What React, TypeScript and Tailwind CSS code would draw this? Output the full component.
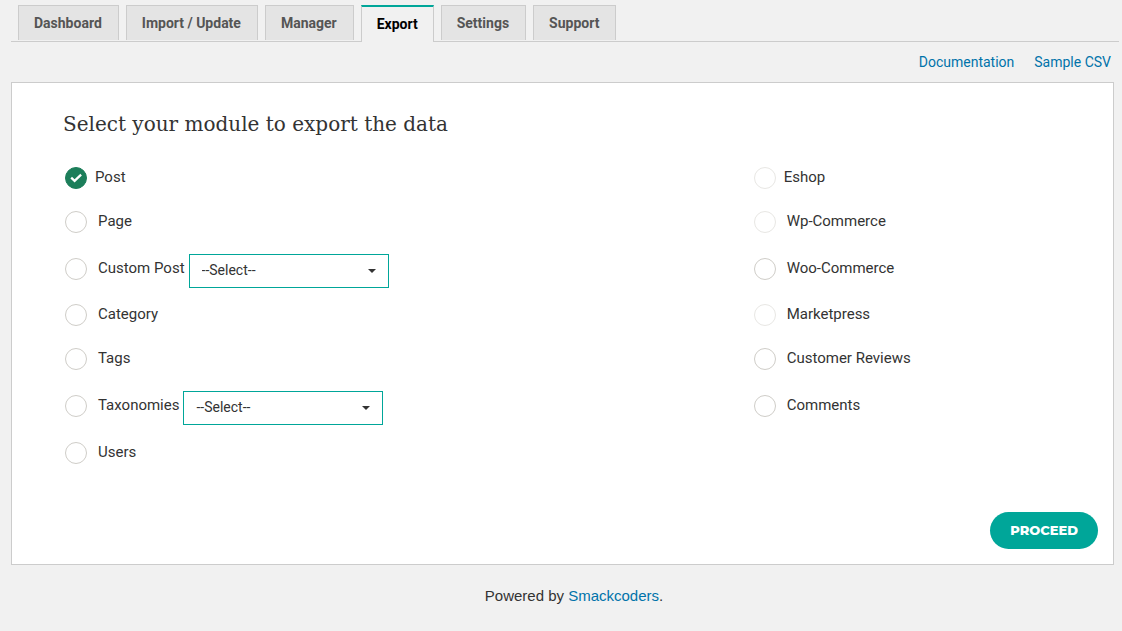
import { useState } from "react";

const tabs = ["Dashboard", "Import / Update", "Manager", "Export", "Settings", "Support"];

type Module = { name: string; disabled?: boolean; select?: boolean; tight?: boolean };

const leftModules: Module[] = [
  { name: "Post", tight: true },
  { name: "Page" },
  { name: "Custom Post", select: true },
  { name: "Category" },
  { name: "Tags" },
  { name: "Taxonomies", select: true },
  { name: "Users" },
];

const rightModules: Module[] = [
  { name: "Eshop", disabled: true, tight: true },
  { name: "Wp-Commerce", disabled: true },
  { name: "Woo-Commerce" },
  { name: "Marketpress", disabled: true },
  { name: "Customer Reviews" },
  { name: "Comments" },
];

function ModuleSelect({ label }: { label: string }) {
  return (
    <div className="relative mt-1 ml-1 w-[200px]">
      <select
        aria-label={label}
        className="block h-[34px] w-full appearance-none border border-[#00a699] bg-white px-3 pb-px text-sm text-[#333]"
      >
        <option>--Select--</option>
      </select>
      <svg
        viewBox="0 0 8 4"
        className="pointer-events-none absolute top-[15px] right-[13px] h-1 w-2 fill-[#333]"
        aria-hidden="true"
      >
        <path d="M0 0h8L4 4z" />
      </svg>
    </div>
  );
}

function ModuleRow({
  module,
  checked,
  onPick,
}: {
  module: Module;
  checked: boolean;
  onPick: (name: string) => void;
}) {
  const id = "module-" + module.name.toLowerCase().replace(/ /g, "-");
  return (
    <div className="flex items-center">
      <div className="relative h-[22px] w-[22px]">
        <input
          id={id}
          type="radio"
          name="module"
          checked={checked}
          disabled={module.disabled}
          onChange={() => onPick(module.name)}
          className="block h-[22px] w-[22px] appearance-none rounded-full border border-[#cfcdc8] bg-white checked:border-[#1c7e5a] checked:bg-[#1c7e5a] disabled:border-[#e8e7e4]"
        />
        {checked && (
          <svg
            viewBox="0 0 22 22"
            className="pointer-events-none absolute inset-0 h-[22px] w-[22px]"
            fill="none"
            stroke="#fff"
            strokeWidth="2.3"
            aria-hidden="true"
          >
            <path d="M6.2 10.6 9.6 13.8 16.1 7.6" />
          </svg>
        )}
      </div>
      <label htmlFor={id} className={module.tight ? "pb-[2px] pl-2" : "pb-[2px] pl-[11px]"}>
        {module.name}
      </label>
      {module.select && <ModuleSelect label={module.name + " type"} />}
    </div>
  );
}

export default function App() {
  const [picked, setPicked] = useState("Post");
  const rows = "grid grid-rows-[44px_44px_49px_44px_44px_49px_45px]";

  return (
    <div className="min-h-screen bg-[#f1f1f1] pt-[5px] pb-6 pl-[11px] font-['Roboto',sans-serif] text-[15px] leading-5 text-[#333]">
      <nav className="mr-[3px] flex items-start gap-[7px] border-b border-[#ccc] pl-[7px] text-sm font-bold">
        {tabs.map((tab) => (
          <a
            key={tab}
            href="#"
            className={
              tab === "Export"
                ? "-mb-px h-[37px] border-x border-t-2 border-x-[#ccc] border-t-[#00a699] bg-[#f1f1f1] px-[15px] pt-[7px] text-black"
                : "mb-px h-[35px] border-x border-t border-[#ccc] bg-[#e4e4e4] pt-[7px] pr-4 pl-[15px] text-[#555]"
            }
          >
            {tab}
          </a>
        ))}
      </nav>

      <div className="mr-[11px] flex justify-end gap-5 pt-[10px] pb-[10px] text-sm text-[#0073aa]">
        <a href="#">Documentation</a>
        <a href="#">Sample CSV</a>
      </div>

      <main className="mr-2 border border-[#ccc] bg-white pt-[25px] pr-[15px] pb-[15px] pl-[51px]">
        <h1 className="font-['Roboto_Slab','DejaVu_Serif',serif] text-xl leading-8">
          Select your module to export the data
        </h1>
        <div className="mt-4 grid grid-cols-[2fr_1fr] pl-[2px]">
          <div className={rows}>
            {leftModules.map((m) => (
              <ModuleRow key={m.name} module={m} checked={picked === m.name} onPick={setPicked} />
            ))}
          </div>
          <div className={rows}>
            {rightModules.map((m) => (
              <ModuleRow key={m.name} module={m} checked={picked === m.name} onPick={setPicked} />
            ))}
          </div>
        </div>
        <div className="mt-[37px] flex justify-end">
          <button
            type="button"
            className="h-[37px] rounded-full bg-[#00a699] px-5 pb-[2px] font-['Montserrat','Inter',sans-serif] text-[13px] font-extrabold text-white"
          >
            PROCEED
          </button>
        </div>
      </main>

      <footer className="mt-[21px] pl-[15px] text-center font-['Liberation_Sans',sans-serif]">
        Powered by{" "}
        <a href="#" className="text-[#0073aa]">
          Smackcoders
        </a>
        .
      </footer>
    </div>
  );
}
